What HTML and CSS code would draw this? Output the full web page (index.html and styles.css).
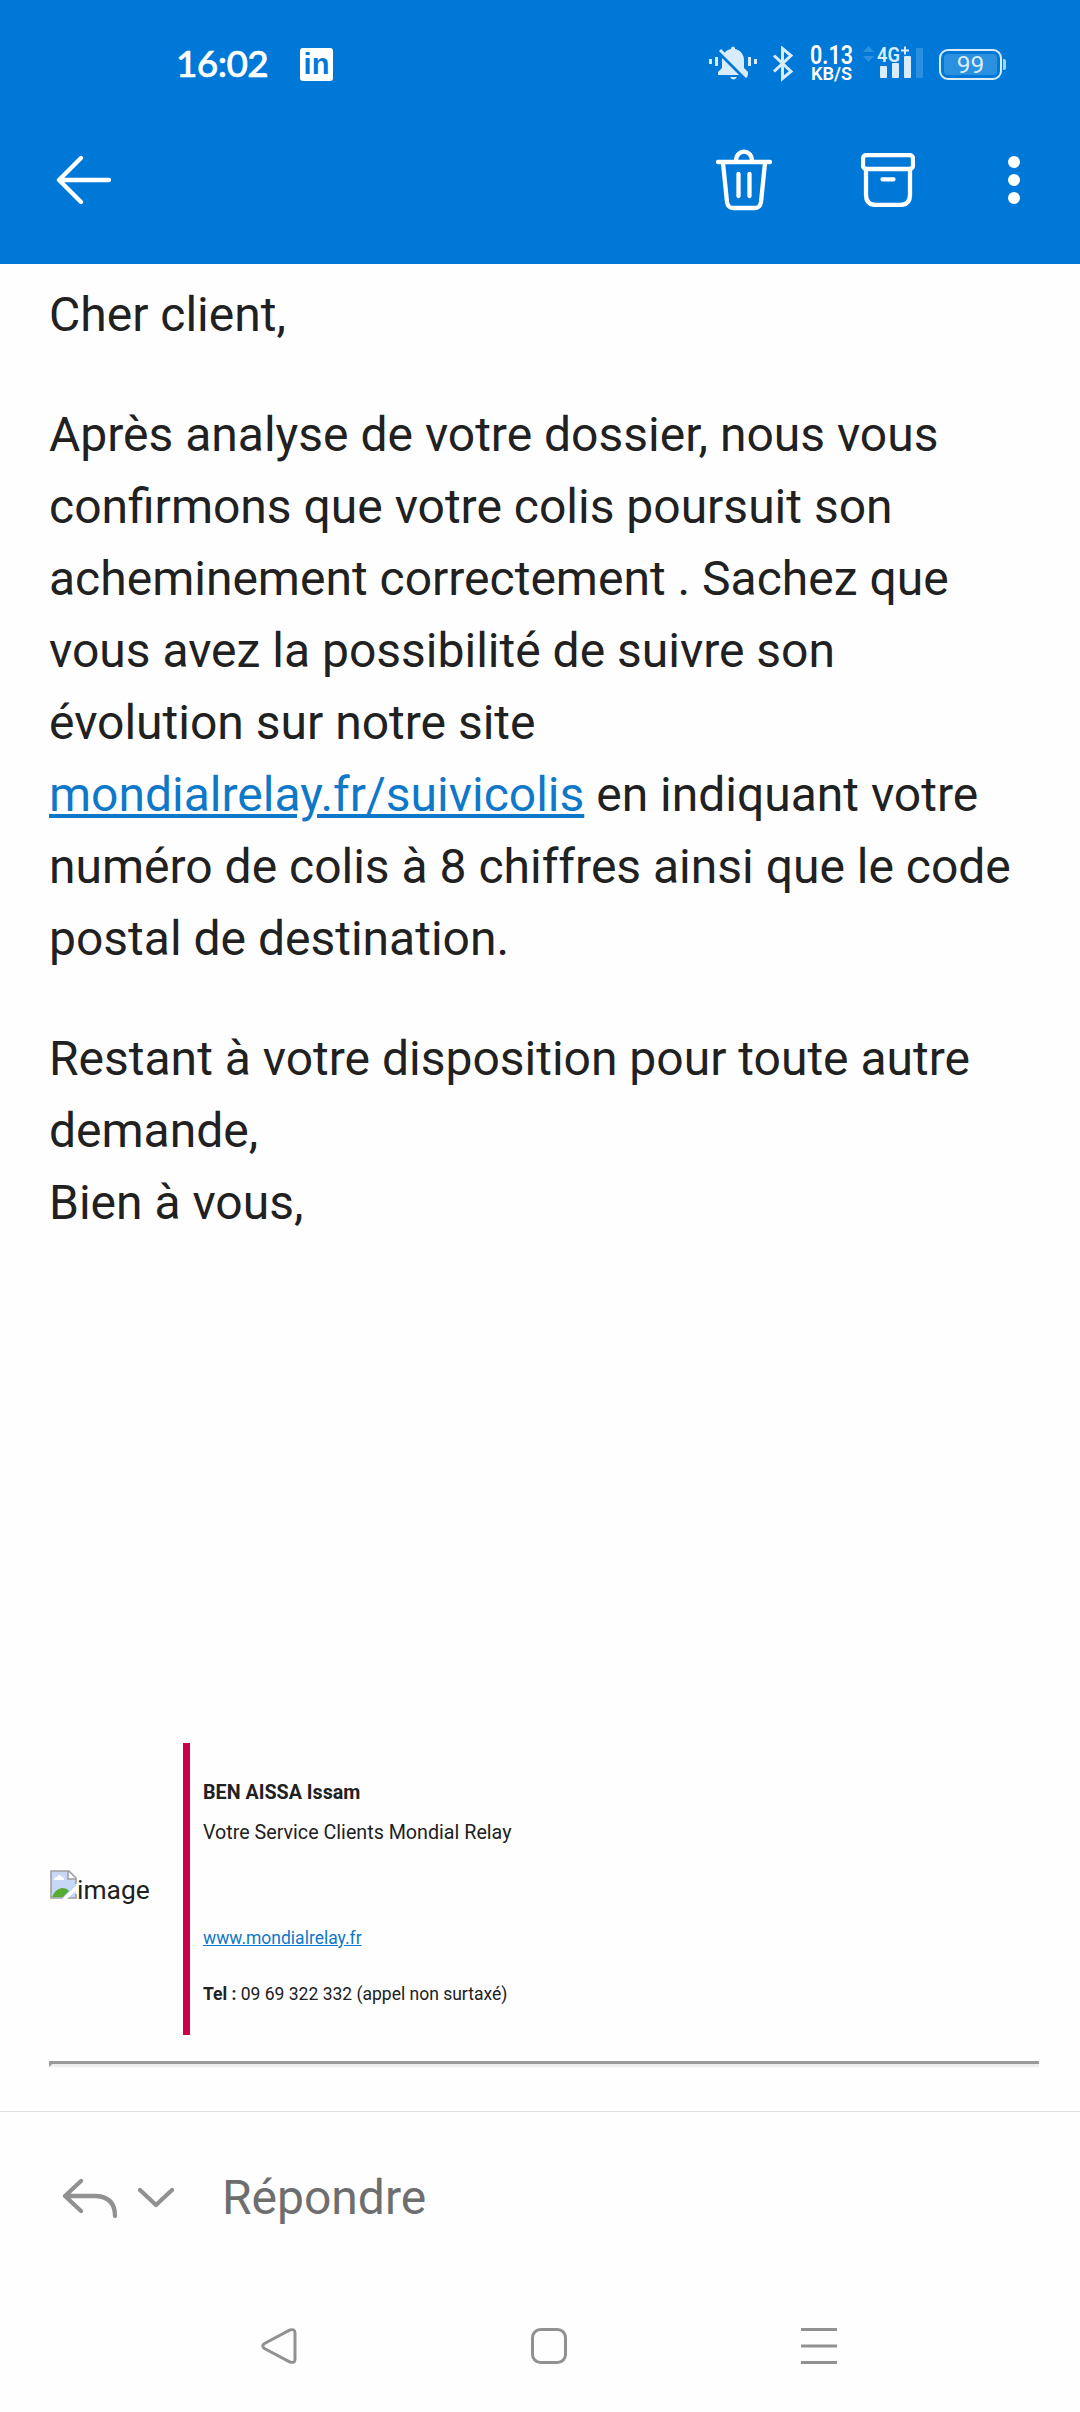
FILE: index.html
```html
<!DOCTYPE html>
<html lang="fr">
  <head>
    <meta charset="UTF-8" />
    <meta name="viewport" content="width=device-width, initial-scale=1.0" />
    <title>Message</title>
    <link rel="stylesheet" href="styles.css">
  </head>
  <body>
    <header>
      <div class="status-bar">
        <span class="time">16:02</span>
        <span class="linkedin">in</span>

        <div class="status-icons">
          <svg class="bell" width="48" height="36" viewBox="0 0 48 36">
            <path d="M9 29V26L13 22V14C13 8 17 4 22 3V2Q24 -1 26 2V3C31 4 35 8 35 14V22L39 26V29Z M21 31H28Q24.500 36 21 31Z" />
            <path class="slash" d="M8 4L38 34" />
            <path d="M11 4L38 31" class="line" />
            <path d="M0 13h3v5H0zM6 11h3v9H6zM39 11h3v9h-3zM45 13h3v5h-3z" />
          </svg>
          <svg class="bluetooth" width="22" height="36" viewBox="0 0 22 36">
            <path d="M2 9.500L19 25.500L10.500 32.500V2.500L19 9.500L2 25.500" />
          </svg>
          <svg class="speed" width="46" height="36" viewBox="0 0 46 36">
            <text class="speed-value" x="1" y="17.500" textLength="43" lengthAdjust="spacingAndGlyphs">0.13</text>
            <text class="speed-unit" x="2" y="34" textLength="41" lengthAdjust="spacingAndGlyphs">KB/S</text>
          </svg>
          <svg class="signal" width="62" height="36" viewBox="0 0 62 36">
            <path class="faint" d="M0 6L5.500 0L11 6zM0 10H11L5.500 16z" />
            <text x="14" y="15.500" textLength="23" lengthAdjust="spacingAndGlyphs">4G</text>
            <path d="M38 3.500h3v-3h2v3h3v2h-3v3h-2v-3h-3z" />
            <rect x="17" y="20" width="7" height="12" rx="1" />
            <rect x="29" y="17" width="7" height="15" rx="1" />
            <rect x="41" y="10" width="7" height="22" rx="1" />
            <rect class="faint" x="53" y="2" width="7" height="30" rx="1" />
          </svg>
          <div class="battery"><span>99</span></div>
        </div>
      </div>

      <div class="toolbar">
        <svg class="icon back" width="56" height="56" viewBox="0 0 56 56">
          <path d="M53 28H3M25 6L3 28L25 50" />
        </svg>
        <svg class="icon trash" width="56" height="62" viewBox="0 0 56 62">
          <path d="M2 13H54M20 12C20 -0.500 36 -0.500 36 12M7 14L11 53Q12 59 17 59H39Q44 59 45 53L49 14M22.500 25V47M33.500 25V47" />
        </svg>
        <svg class="icon archive" width="54" height="54" viewBox="0 0 54 54">
          <rect x="2" y="2" width="50" height="14" rx="3.500" />
          <path d="M5 16V42Q5 52 15 52H39Q49 52 49 42V16M21.500 26.300H32.500" />
        </svg>
        <svg class="more" width="12" height="48" viewBox="0 0 12 48">
          <circle cx="6" cy="6" r="6" />
          <circle cx="6" cy="24" r="6" />
          <circle cx="6" cy="42" r="6" />
        </svg>
      </div>
    </header>

    <main>
      <p>Cher client,</p>
      <p>
        Après analyse de votre dossier, nous vous confirmons que votre colis
        poursuit son acheminement correctement . Sachez que vous avez la
        possibilité de suivre son évolution sur notre site
        <a href="#">mondialrelay.fr/suivicolis</a> en indiquant votre numéro de
        colis à 8 chiffres ainsi que le code postal de destination.
      </p>
      <p>
        Restant à votre disposition pour toute autre demande,<br />
        Bien à vous,
      </p>

      <div class="signature">
        <div class="missing-image">
          <svg width="27" height="29" viewBox="0 0 27 29">
            <path d="M1 1H19L26 8V28H1Z" fill="#c6d8f6" />
            <path d="M4 10Q4 7 7 7Q9 3 12 7Q15 8 14 10Z" fill="#fff" />
            <path d="M2 27Q5 19 12 18Q17 18 19 21L13 27Z" fill="#56ab35" />
            <path d="M18 1V9H26Z" fill="#fff" />
            <path d="M26 14V8L19 1H1V28H26V24M18 1V9H26" fill="none" stroke="#a0a0a0" stroke-width="1.600" />
            <path d="M12 29L27 15V20L17 29Z" fill="#fff" />
          </svg>
          <span>image</span>
        </div>
        <div class="contact">
          <div class="name">BEN AISSA Issam</div>
          <div class="service">Votre Service Clients Mondial Relay</div>
          <a class="site" href="#">www.mondialrelay.fr</a>
          <div class="phone"><b>Tel :</b> 09 69 322 332 (appel non surtaxé)</div>
        </div>
      </div>
      <hr />
    </main>

    <footer>
      <div class="reply-bar">
        <svg class="reply" width="56" height="42" viewBox="0 0 56 42">
          <path d="M19 4L3 19L19 34M3 19H34Q53 20 53 39" />
        </svg>
        <svg class="chevron" width="36" height="22" viewBox="0 0 36 22">
          <path d="M2 3L18 18L34 3" />
        </svg>
        <span>Répondre</span>
      </div>
      <nav>
        <svg width="36" height="36" viewBox="0 0 36 36">
          <path d="M3.500 15.500L29 2Q34 0.500 34 5V31Q34 35.500 29 34L3.500 20.500Q0 18 3.500 15.500Z" />
        </svg>
        <svg width="36" height="36" viewBox="0 0 36 36">
          <rect x="1.500" y="1.500" width="33" height="33" rx="8" />
        </svg>
        <svg width="36" height="36" viewBox="0 0 36 36">
          <path d="M0 1.500H36M0 18H36M0 34.500H36" />
        </svg>
      </nav>
    </footer>
  </body>
</html>
```

FILE: styles.css
```css
* {
  box-sizing: border-box;
}

body {
  margin: 0;
  height: 2412px;
  display: flex;
  flex-direction: column;
  font-family: Roboto, sans-serif;
  color: #212121;
  background-color: #fefefe;
}

header {
  height: 264px;
  background-color: #0078d7;
  color: #ffffff;
}

svg {
  display: block;
  flex: none;
}

.status-bar {
  height: 128px;
  padding: 0 74px 0 176px;
  display: flex;
  align-items: center;
}

.time {
  width: 124px;
  padding-bottom: 3px;
  font-family: Lato, sans-serif;
  font-size: 37px;
  font-weight: 500;
  letter-spacing: -0.6px;
  -webkit-text-stroke: 0.6px #ffffff;
}

.linkedin {
  width: 33px;
  height: 33px;
  border-radius: 3px;
  background-color: #ffffff;
  color: #0078d7;
  font-family: "Liberation Sans", sans-serif;
  font-size: 29px;
  font-weight: bold;
  line-height: 32px;
  text-align: center;
}

.status-icons {
  margin-left: auto;
  display: flex;
  align-items: center;
  color: #d9ecfb;
  fill: #d9ecfb;
}

.bell .slash {
  stroke: #0078d7;
  stroke-width: 4;
}

.bell .line {
  stroke: #d9ecfb;
  stroke-width: 3;
}

.bluetooth {
  margin-left: 15px;
  fill: none;
  stroke: #d9ecfb;
  stroke-width: 3;
}

.speed {
  margin-left: 15px;
  overflow: visible;
  fill: #ffffff;
  font-weight: 600;
}

.speed-value {
  font-size: 25px;
}

.speed-unit {
  font-size: 18.5px;
}

.signal {
  margin-left: 8px;
  overflow: visible;
}

.signal text {
  font-size: 21px;
  font-weight: 600;
}

.signal .faint {
  fill: #2b90df;
}

.battery {
  position: relative;
  width: 63px;
  height: 31px;
  margin-left: 14px;
  margin-right: 4px;
  padding: 3px;
  border: 2px solid #d9ecfb;
  border-radius: 9px;
}

.battery::after {
  content: "";
  position: absolute;
  right: -6px;
  top: 8px;
  width: 3px;
  height: 11px;
  border-radius: 0 2px 2px 0;
  background-color: #a6d1f3;
}

.battery span {
  display: block;
  height: 21px;
  border-radius: 4px;
  background-color: #2b90df;
  font-size: 24.5px;
  line-height: 22px;
  text-align: center;
}

.toolbar {
  height: 104px;
  padding: 0 60px 0 56px;
  display: flex;
  align-items: center;
}

.icon {
  fill: none;
  stroke: #ffffff;
  stroke-width: 4.3;
  stroke-linecap: round;
  stroke-linejoin: round;
}

.trash {
  margin-left: auto;
}

.archive {
  margin-left: 89px;
}

.more {
  margin-left: 93px;
  fill: #ffffff;
}

main {
  height: 1847px;
  padding: 15px 41px 0 49px;
}

p {
  margin: 0 0 48px;
  font-size: 48px;
  line-height: 72px;
}

a {
  color: #0f78c8;
}

.signature {
  height: 292px;
  margin-top: 504px;
  display: flex;
}

.missing-image {
  width: 134px;
  padding: 127px 0 0 1px;
  display: flex;
  align-items: flex-start;
  font-size: 26.4px;
  line-height: 40px;
}

.contact {
  flex: 1;
  padding: 30px 0 0 13px;
  border-left: 7px solid #cc0049;
  font-size: 19.7px;
  line-height: 40px;
}

.name {
  font-weight: bold;
}

.site {
  display: block;
  margin-top: 65px;
  font-size: 17.5px;
}

.phone {
  margin-top: 16px;
  font-size: 17.5px;
}

hr {
  height: 6px;
  margin: 26px 0 0;
  border: 0;
  border-top: 3px solid #9a9a9a;
  border-left: 3px solid #9a9a9a;
  border-bottom: 3px solid #eeeeee;
}

footer {
  height: 301px;
  border-top: 1px solid #e0e0e0;
}

.reply-bar {
  height: 172px;
  padding-left: 62px;
  display: flex;
  align-items: center;
  font-size: 48px;
  color: #6e6e6e;
  fill: none;
  stroke: #919191;
  stroke-width: 4.3;
  stroke-linecap: round;
  stroke-linejoin: round;
}

.chevron {
  margin-left: 20px;
}

.reply-bar span {
  margin-left: 48px;
  padding-bottom: 2px;
}

nav {
  padding: 44px 243px 0 261px;
  display: flex;
  justify-content: space-between;
  fill: none;
  stroke: #919191;
  stroke-width: 3;
}
```
